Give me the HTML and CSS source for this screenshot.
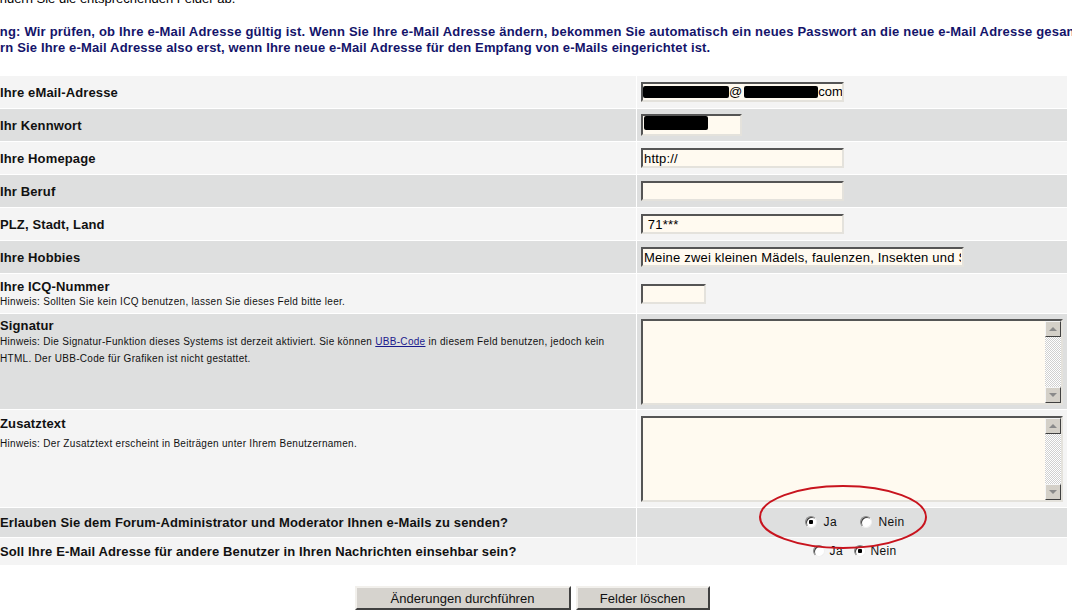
FILE: index.html
```html
<!DOCTYPE html>
<html lang="de">
<head>
    <meta charset="UTF-8">
    <title>Profil bearbeiten</title>
    <link rel="stylesheet" href="styles.css">
</head>
<body>
    <div class="page">
        <p class="intro">Ändern Sie die entsprechenden Felder ab.</p>

        <p class="notice">
            <span class="line">Achtung: Wir prüfen, ob Ihre e-Mail Adresse gültig ist. Wenn Sie Ihre e-Mail Adresse ändern, bekommen Sie automatisch ein neues Passwort an die neue e-Mail Adresse gesandt.</span>
            <span class="line second">Ändern Sie Ihre e-Mail Adresse also erst, wenn Ihre neue e-Mail Adresse für den Empfang von e-Mails eingerichtet ist.</span>
        </p>

        <form class="profile-form">
            <table class="form-table">
                <tr class="light">
                    <td class="label">Ihre eMail-Adresse</td>
                    <td class="field">
                        <div class="textbox wide mail"><span class="blot b1"></span>@<span class="blot b2"></span>com</div>
                    </td>
                </tr>
                <tr class="dark">
                    <td class="label">Ihr Kennwort</td>
                    <td class="field">
                        <div class="textbox short"><span class="blot b3"></span></div>
                    </td>
                </tr>
                <tr class="light">
                    <td class="label">Ihre Homepage</td>
                    <td class="field"><input class="textbox wide" type="text" value="http://"></td>
                </tr>
                <tr class="dark">
                    <td class="label">Ihr Beruf</td>
                    <td class="field"><input class="textbox wide" type="text" value=""></td>
                </tr>
                <tr class="light">
                    <td class="label">PLZ, Stadt, Land</td>
                    <td class="field"><input class="textbox wide" type="text" value=" 71***"></td>
                </tr>
                <tr class="dark">
                    <td class="label">Ihre Hobbies</td>
                    <td class="field"><input class="textbox xwide" type="text" value="Meine zwei kleinen Mädels, faulenzen, Insekten und Spinnen"></td>
                </tr>
                <tr class="light row-icq">
                    <td class="label">
                        Ihre ICQ-Nummer
                        <div class="hint">Hinweis: Sollten Sie kein ICQ benutzen, lassen Sie dieses Feld bitte leer.</div>
                    </td>
                    <td class="field"><input class="textbox tiny" type="text" value=""></td>
                </tr>
                <tr class="dark row-sig">
                    <td class="label top">
                        Signatur
                        <div class="hint long">Hinweis: Die Signatur-Funktion dieses Systems ist derzeit aktiviert. Sie können <a href="#">UBB-Code</a> in diesem Feld benutzen, jedoch kein HTML. Der UBB-Code für Grafiken ist nicht gestattet.</div>
                    </td>
                    <td class="field">
                        <div class="area">
                            <textarea></textarea>
                            <div class="scrollbar">
                                <span class="sb-btn up"></span>
                                <span class="sb-track"></span>
                                <span class="sb-btn down"></span>
                            </div>
                        </div>
                    </td>
                </tr>
                <tr class="light row-extra">
                    <td class="label top">
                        Zusatztext
                        <div class="hint spaced">Hinweis: Der Zusatztext erscheint in Beiträgen unter Ihrem Benutzernamen.</div>
                    </td>
                    <td class="field">
                        <div class="area">
                            <textarea></textarea>
                            <div class="scrollbar">
                                <span class="sb-btn up"></span>
                                <span class="sb-track"></span>
                                <span class="sb-btn down"></span>
                            </div>
                        </div>
                    </td>
                </tr>
                <tr class="dark row-radio">
                    <td class="label">Erlauben Sie dem Forum-Administrator und Moderator Ihnen e-Mails zu senden?</td>
                    <td class="choice">
                        <label><input type="radio" name="adminmail" checked> Ja</label>
                        <label class="gap"><input type="radio" name="adminmail"> Nein</label>
                    </td>
                </tr>
                <tr class="light row-radio2">
                    <td class="label">Soll Ihre E-Mail Adresse für andere Benutzer in Ihren Nachrichten einsehbar sein?</td>
                    <td class="choice tight">
                        <label><input type="radio" name="showmail"> Ja</label>
                        <label><input type="radio" name="showmail" checked> Nein</label>
                    </td>
                </tr>
            </table>

            <div class="buttons">
                <button type="submit" class="btn-submit">Änderungen durchführen</button>
                <button type="reset" class="btn-reset">Felder löschen</button>
            </div>
        </form>
    </div>

    <!-- red marker drawn over the first radio row -->
    <svg class="marker" width="180" height="70" viewBox="0 0 180 70">
        <ellipse cx="90" cy="35" rx="83" ry="31" fill="none" stroke="#c8141e" stroke-width="2"/>
    </svg>
</body>
</html>
```

FILE: styles.css
```css
body {
    font-family: "Liberation Sans", Arial, sans-serif;
    margin: 0;
    padding: 0;
    background: #fff;
    color: #000;
    overflow: hidden;
}

.page {
    margin-left: -4px;
    width: 1072px;
}

.intro {
    font-size: 13px;
    line-height: 16px;
    margin: -9px 0 0 -5px;
}

.notice {
    font-size: 13px;
    font-weight: bold;
    line-height: 16px;
    letter-spacing: 0.2px;
    color: #14146a;
    margin: 17px 0 0 -34px;
    white-space: nowrap;
}

.notice .line {
    display: block;
}

.notice .second {
    margin-left: 5px;
    letter-spacing: 0.15px;
}

.form-table {
    width: 1072px;
    border-collapse: separate;
    border-spacing: 1px;
    margin-top: 19px;
}

.form-table td {
    padding: 0;
}

.light td {
    background: #f4f4f4;
}

.dark td {
    background: #dedfdf;
}

.form-table tr {
    height: 32px;
}

.label {
    width: 636px;
    padding-left: 3px !important;
    font-size: 13px;
    font-weight: bold;
    letter-spacing: 0.13px;
    color: #111;
}

.label.top {
    vertical-align: top;
}

.field {
    padding-left: 4px !important;
}

.hint {
    font-size: 10px;
    font-weight: normal;
    letter-spacing: 0.3px;
    line-height: 17px;
}

.hint.long {
    width: 612px;
}

.hint.spaced {
    margin-top: 4px;
}

.hint a {
    color: #1a1a8c;
}

.row-icq {
    height: 39px !important;
}

.row-icq .label {
    line-height: 14px;
    padding-top: 3px !important;
}

.row-icq .hint {
    line-height: 16px;
}

.row-sig {
    height: 95px !important;
}

.row-sig .label {
    padding-top: 5px !important;
    line-height: 14px;
}

.row-extra {
    height: 97px !important;
}

.row-extra .label {
    padding-top: 7px !important;
    line-height: 14px;
}

.row-radio {
    height: 29px !important;
}

.row-radio2 {
    height: 27px !important;
}

.textbox {
    display: block;
    box-sizing: border-box;
    height: 20px;
    margin: 0;
    padding: 0 1px;
    font-family: "Liberation Sans", Arial, sans-serif;
    font-size: 13px;
    letter-spacing: 0.2px;
    line-height: 16px;
    color: #000;
    background: #fffaf0;
    border: 2px solid;
    border-color: #555 #e4e2dc #e4e2dc #555;
    white-space: nowrap;
    overflow: hidden;
}

.textbox.mail {
    padding: 0;
    letter-spacing: 0;
}

.wide {
    width: 203px;
}

.short {
    width: 101px;
    height: 22px;
}

.xwide {
    width: 323px;
}

.tiny {
    width: 65px;
}

.blot {
    display: inline-block;
    background: #000;
    height: 12px;
    vertical-align: -2px;
    border-radius: 2px;
}

.b1 {
    width: 86px;
}

.b2 {
    width: 74px;
    margin-left: 2px;
}

.b3 {
    width: 64px;
    height: 14px;
}

.area {
    display: flex;
    box-sizing: border-box;
    width: 422px;
    height: 86px;
    background: #fffaf0;
    border: 2px solid;
    border-color: #555 #e4e2dc #e4e2dc #555;
}

.area textarea {
    flex: 1;
    border: none;
    background: transparent;
    resize: none;
    outline: none;
}

.scrollbar {
    display: flex;
    flex-direction: column;
    width: 16px;
}

.sb-track {
    flex: 1;
    background: repeating-conic-gradient(#fff 0 25%, #d0d0d0 0 50%) 0 0 / 2px 2px;
}

.sb-btn {
    position: relative;
    box-sizing: border-box;
    height: 16px;
    background: #d4d0c8;
    border: 1px solid;
    border-color: #f4f4f4 #404040 #404040 #f4f4f4;
}

.sb-btn::after {
    content: "";
    position: absolute;
    left: 3px;
    top: 5px;
    border-left: 4px solid transparent;
    border-right: 4px solid transparent;
}

.sb-btn.up::after {
    border-bottom: 4px solid #8a8a8a;
}

.sb-btn.down::after {
    border-top: 4px solid #8a8a8a;
}

.choice {
    text-align: center;
    font-size: 12px;
    letter-spacing: 0.3px;
    color: #111;
    padding-left: 2px !important;
}

.choice label {
    display: inline-flex;
    align-items: center;
    gap: 4px;
}

.choice .gap {
    margin-left: 16px;
}

.choice.tight label {
    gap: 2px;
}

.choice.tight label + label {
    margin-left: 4px;
}

input[type="radio"] {
    appearance: none;
    -webkit-appearance: none;
    box-sizing: border-box;
    width: 12px;
    height: 12px;
    margin: 0 3px;
    border-radius: 50%;
    border: 1px solid;
    border-color: #8a8a8a #f0f0f0 #f0f0f0 #8a8a8a;
    background: #fff;
    box-shadow: inset 1px 1px 0 #404040;
}

input[type="radio"]:checked {
    background: radial-gradient(circle, #000 0 2px, #fff 2.5px);
}

.buttons {
    display: flex;
    justify-content: center;
    gap: 5px;
    margin-top: 20px;
}

.buttons button {
    height: 24px;
    font-family: "Liberation Sans", Arial, sans-serif;
    font-size: 13px;
    color: #111;
    background: #d6d3ce;
    border: 2px solid;
    border-color: #f2f0ec #404040 #404040 #f2f0ec;
    padding: 0;
}

.btn-submit {
    width: 216px;
}

.btn-reset {
    width: 134px;
}

.marker {
    position: absolute;
    left: 753px;
    top: 482px;
}
```
